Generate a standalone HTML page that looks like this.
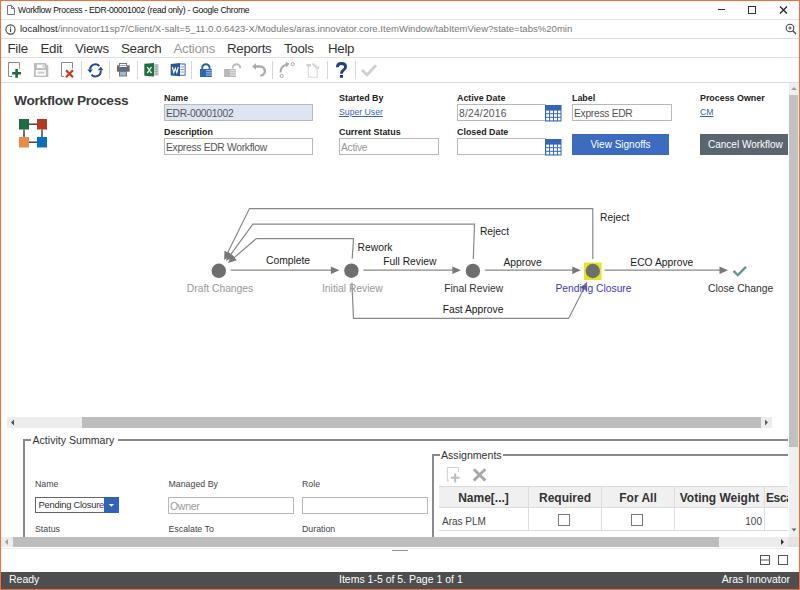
<!DOCTYPE html>
<html><head><meta charset="utf-8">
<style>
*{box-sizing:border-box;margin:0;padding:0}
html,body{width:800px;height:590px;overflow:hidden;background:#fff;font-family:"Liberation Sans",sans-serif;color:#333}
.a{position:absolute;white-space:nowrap}
#frame{position:absolute;left:0;top:0;width:800px;height:590px;border:1px solid #f0703a;pointer-events:none;z-index:50}
.hl{position:absolute;height:1px;background:#e3e3e3}
.menu{font-size:13.3px;color:#333;top:41px;line-height:16px;letter-spacing:-0.3px}
.sep{position:absolute;top:61px;width:1px;height:18px;background:#d6d6d6}
.lbl{font-size:8.9px;font-weight:bold;color:#222}
.inp{position:absolute;height:17px;border:1px solid #b9b9b9;background:#fff;font-size:10.3px;letter-spacing:-0.3px;color:#555;padding-left:1px;line-height:17px;overflow:hidden}
.lnk{font-size:8.7px;color:#3b62b0;text-decoration:underline}
.btn{position:absolute;white-space:nowrap;overflow:hidden;height:21px;color:#fff;font-size:10px;text-align:center;line-height:21px}
.dg{font-size:11px;color:#222}
.fl{font-size:8.8px;color:#444}
.th{position:absolute;top:487px;height:21px;font-size:12px;font-weight:bold;color:#333;text-align:center;line-height:23px;background:#f0f0f0;border-right:1px solid #ddd;border-bottom:1px solid #ddd}
.td{position:absolute;top:508px;height:23px;border-right:1px solid #ddd;border-bottom:1px solid #ddd;font-size:10px;color:#444;line-height:27px}
.cb{position:absolute;width:12px;height:12px;border:1px solid #777;background:#fff}
</style></head><body>
<div id="frame"></div>

<!-- title bar -->
<svg class="a" style="left:7px;top:5px" width="8" height="10" viewBox="0 0 8 10"><path d="M0.5 0.5 H4.5 L7.5 3.5 V9.5 H0.5 Z M4.5 0.5 V3.5 H7.5" fill="none" stroke="#666" stroke-width="0.9"/></svg>
<div class="a" style="left:18px;top:5px;font-size:8.6px;letter-spacing:-0.27px;color:#111;line-height:11px">Workflow Process - EDR-00001002 (read only) - Google Chrome</div>
<div class="a" style="left:717.5px;top:9px;width:7px;height:1px;background:#333"></div>
<div class="a" style="left:748px;top:6px;width:8px;height:7.5px;border:1.2px solid #333"></div>
<svg class="a" style="left:779px;top:6px" width="9" height="8" viewBox="0 0 9 8"><path d="M1 0.5 L8 7.5 M8 0.5 L1 7.5" stroke="#222" stroke-width="1.25"/></svg>
<div class="hl" style="left:1px;top:19px;width:798px;height:1px;background:#e2e2e2"></div>

<!-- url bar -->
<svg class="a" style="left:5px;top:24px" width="11" height="11" viewBox="0 0 11 11"><circle cx="5.5" cy="5.5" r="4.6" fill="none" stroke="#444" stroke-width="1.1"/><rect x="5" y="4.5" width="1.1" height="3.5" fill="#444"/><rect x="5" y="2.7" width="1.1" height="1.1" fill="#444"/></svg>
<div class="a" style="left:20px;top:22px;font-size:9.57px;line-height:13px;color:#777"><span style="color:#222">localhost</span>/innovator11sp7/Client/X-salt=5_11.0.0.6423-X/Modules/aras.innovator.core.ItemWindow/tabItemView?state=tabs%20min</div>
<svg class="a" style="left:785px;top:23px" width="12" height="12" viewBox="0 0 12 12"><circle cx="5" cy="5" r="3.8" fill="none" stroke="#444" stroke-width="1.1"/><path d="M7.8 7.8 L11 11" stroke="#444" stroke-width="1.3"/><path d="M3.3 5 H6.7 M5 3.3 V6.7" stroke="#444" stroke-width="0.9"/></svg>
<div class="hl" style="left:1px;top:38px;width:798px;background:#dcdcdc"></div>

<!-- menu -->
<div class="a menu" style="left:7.5px">File</div>
<div class="a menu" style="left:40.5px">Edit</div>
<div class="a menu" style="left:75px">Views</div>
<div class="a menu" style="left:121px">Search</div>
<div class="a menu" style="left:173.5px;color:#999">Actions</div>
<div class="a menu" style="left:227px">Reports</div>
<div class="a menu" style="left:284px">Tools</div>
<div class="a menu" style="left:328px">Help</div>
<div class="hl" style="left:1px;top:57px;width:798px;background:#e0e0e0"></div>

<!-- toolbar -->
<!--TB--><svg class="a" style="left:0;top:0" width="400" height="84" viewBox="0 0 400 84"><path d="M12 76.5 H8.5 V62.5 H19.5 V68.5" fill="none" stroke="#8a8a8a" stroke-width="1"/><path d="M12.2 73.3 H21 M16.6 69 V77.7" stroke="#1e6b43" stroke-width="2.6"/><path d="M34 63 H45.3 L48.3 66 V77 H34 Z" fill="#bdbdbd"/><rect x="37" y="64.6" width="7.5" height="3.5" fill="#fff"/><rect x="42.6" y="65" width="1.2" height="2.4" fill="#bdbdbd"/><rect x="35.8" y="70" width="10.1" height="5.6" fill="#fff"/><rect x="37.5" y="71.5" width="7" height="2.3" fill="#cfcfcf"/><path d="M64 76.5 H61.5 V62.5 H72.5 V68.5" fill="none" stroke="#8a8a8a" stroke-width="1"/><path d="M66 70.3 L73 77.2 M73 70.3 L66 77.2" stroke="#c23a22" stroke-width="2.2"/><path d="M99.3 66 A5.3 5.3 0 0 0 90.1 69.5" fill="none" stroke="#1f4b8f" stroke-width="2"/><path d="M87.3 69.5 H92.9 L90.1 73 Z" fill="#1f4b8f"/><path d="M91.5 74.6 A5.3 5.3 0 0 0 100.7 70.3" fill="none" stroke="#1f4b8f" stroke-width="2"/><path d="M97.9 70.3 H103.5 L100.7 66.8 Z" fill="#1f4b8f"/><rect x="119.5" y="63.5" width="7" height="3" fill="#fff" stroke="#777" stroke-width="1"/><rect x="117" y="65.3" width="12.7" height="6.4" fill="#6a6a6a"/><rect x="119.6" y="65.8" width="7" height="1.2" fill="#fff"/><rect x="120" y="67" width="6.4" height="1.5" fill="#3b6bc0"/><rect x="119.5" y="71.5" width="7" height="4.5" fill="#9cb9e6" stroke="#777" stroke-width="1"/><rect x="153" y="64" width="5.7" height="11.5" fill="#d0d0d0"/><path d="M154.5 66.5 H158 M154.5 69 H158 M154.5 71.5 H158 M154.5 74 H158 M156.3 64 V75.5" stroke="#8aa898" stroke-width="0.7"/><path d="M144.3 63.8 L154 62.9 V76.6 L144.3 75.8 Z" fill="#1d6f42"/><path d="M147.2 67 L151.4 73.2 M151.4 67 L147.2 73.2" stroke="#fff" stroke-width="1.3"/><rect x="179.5" y="64" width="5.6" height="11.2" fill="#fff" stroke="#2b5797" stroke-width="0.9"/><path d="M180.5 67 H184 M180.5 69.5 H184 M180.5 72 H184" stroke="#7d97c4" stroke-width="1"/><path d="M170.7 63.9 L180 63 V76.3 L170.7 75.5 Z" fill="#2b5797"/><path d="M172.4 67 L173.8 72.6 L175.3 68.2 L176.8 72.6 L178.3 67" fill="none" stroke="#fff" stroke-width="1.1"/><path d="M202.2 69.5 V67.2 A3.8 3.8 0 0 1 209.6 67.2 V69.5" fill="none" stroke="#2e5fa8" stroke-width="1.8"/><rect x="200" y="69" width="11.8" height="8" fill="#2e64b0"/><path d="M206 70.7 H211.8 M206 72.9 H211.8 M206 75.1 H211.8" stroke="#c4d3ee" stroke-width="0.9"/><path d="M232.8 68.5 V67.2 A3.8 3.8 0 0 1 240.2 67.2 V68.3" fill="none" stroke="#bdbdbd" stroke-width="1.8"/><rect x="224.1" y="69" width="11.8" height="8" fill="#b9b9b9"/><path d="M230 70.7 H235.9 M230 72.9 H235.9 M230 75.1 H235.9" stroke="#f0f0f0" stroke-width="0.9"/><path d="M255.5 66.5 H260.3 A4.55 4.55 0 0 1 260.3 75.6" fill="none" stroke="#aaaaaa" stroke-width="2.4"/><path d="M252 66.5 L256 63.2 V69.8 Z" fill="#aaaaaa"/><circle cx="281.7" cy="76" r="1.6" fill="none" stroke="#aaa" stroke-width="1"/><circle cx="292.7" cy="64.2" r="1.6" fill="none" stroke="#aaa" stroke-width="1"/><path d="M280.5 72.5 Q280.5 66 287 64.6" fill="none" stroke="#aaa" stroke-width="2"/><path d="M289.5 63.7 L285.5 61.8 L286.3 67.5 Z" fill="#aaa"/><path d="M311 66 H308.3 V77.2 H317.2 V69" fill="none" stroke="#d4d4d4" stroke-width="1"/><rect x="306.5" y="64" width="4.5" height="2.5" fill="#d4d4d4"/><path d="M312.5 63.5 L317 67.5" stroke="#d4d4d4" stroke-width="2.3"/><path d="M319.5 65.5 L319 69 L315 69 Z" fill="#d4d4d4"/><path d="M337.4 67.2 C337.4 64.6 339.1 63.5 341.5 63.5 C344.1 63.5 345.6 64.9 345.6 66.8 C345.6 68.6 344.4 69.5 343.1 70.4 C341.9 71.2 341.5 71.9 341.5 73.8" fill="none" stroke="#1e3f80" stroke-width="2.9"/><rect x="339.9" y="75" width="3.1" height="2.8" fill="#1e3f80"/><path d="M362 70 L367 75 L376 65.3" fill="none" stroke="#cfcfcf" stroke-width="2.8"/></svg><!--/TB-->
<div class="sep" style="left:81px"></div>
<div class="sep" style="left:109px"></div>
<div class="sep" style="left:137px"></div>
<div class="sep" style="left:191px"></div>
<div class="sep" style="left:272px"></div>
<div class="sep" style="left:327px"></div>
<div class="sep" style="left:355px"></div>
<div class="hl" style="left:1px;top:82px;width:798px;background:#dedede"></div>

<!-- form -->
<div class="a" style="left:14px;top:93px;font-size:13.7px;letter-spacing:-0.25px;font-weight:bold;color:#3a3a3a">Workflow Process</div>
<svg class="a" style="left:19px;top:119px" width="29" height="29" viewBox="0 0 29 29">
<path d="M10 5.2 H18 M5 10.5 V18 M23 10.5 V18 M10 23.3 H18" stroke="#444" stroke-width="1.5"/>
<rect x="0" y="0" width="10" height="10.5" fill="#1e6b43"/>
<rect x="18" y="0" width="10" height="10.5" fill="#b33a20"/>
<rect x="0" y="18" width="10" height="10.5" fill="#e88a48"/>
<rect x="18" y="18" width="10" height="10.5" fill="#0a6fc2"/>
</svg>

<div class="a lbl" style="left:164px;top:93px">Name</div>
<div class="inp" style="left:164px;top:104px;width:149px;background:#dde4f2">EDR-00001002</div>
<div class="a lbl" style="left:164px;top:127px">Description</div>
<div class="inp" style="left:164px;top:138px;width:149px">Express EDR Workflow</div>

<div class="a lbl" style="left:339px;top:93px">Started By</div>
<div class="a lnk" style="left:339px;top:106.5px">Super User</div>
<div class="a lbl" style="left:339px;top:127px">Current Status</div>
<div class="inp" style="left:339px;top:138px;width:100px;color:#999">Active</div>

<div class="a lbl" style="left:457px;top:93px">Active Date</div>
<div class="inp" style="left:457px;top:104px;width:89px;letter-spacing:0.2px">8/24/2016</div>
<svg class="a" style="left:545px;top:105px" width="17" height="17" viewBox="0 0 17 17"><rect x="0" y="0" width="16.5" height="16.5" fill="#3566b5"/><g fill="#fff"><rect x="1.2" y="5.6" width="2.9" height="2.6"/><rect x="5.1" y="5.6" width="2.9" height="2.6"/><rect x="9" y="5.6" width="2.9" height="2.6"/><rect x="12.9" y="5.6" width="2.6" height="2.6"/><rect x="1.2" y="9.2" width="2.9" height="2.6"/><rect x="5.1" y="9.2" width="2.9" height="2.6"/><rect x="9" y="9.2" width="2.9" height="2.6"/><rect x="12.9" y="9.2" width="2.6" height="2.6"/><rect x="1.2" y="12.8" width="2.9" height="2.6"/><rect x="5.1" y="12.8" width="2.9" height="2.6"/><rect x="9" y="12.8" width="2.9" height="2.6"/><rect x="12.9" y="12.8" width="2.6" height="2.6"/></g></svg>
<div class="a lbl" style="left:457px;top:127px">Closed Date</div>
<div class="inp" style="left:457px;top:138px;width:89px"></div>

<svg class="a" style="left:545px;top:139px" width="17" height="17" viewBox="0 0 17 17"><rect x="0" y="0" width="16.5" height="16.5" fill="#3566b5"/><g fill="#fff"><rect x="1.2" y="5.6" width="2.9" height="2.6"/><rect x="5.1" y="5.6" width="2.9" height="2.6"/><rect x="9" y="5.6" width="2.9" height="2.6"/><rect x="12.9" y="5.6" width="2.6" height="2.6"/><rect x="1.2" y="9.2" width="2.9" height="2.6"/><rect x="5.1" y="9.2" width="2.9" height="2.6"/><rect x="9" y="9.2" width="2.9" height="2.6"/><rect x="12.9" y="9.2" width="2.6" height="2.6"/><rect x="1.2" y="12.8" width="2.9" height="2.6"/><rect x="5.1" y="12.8" width="2.9" height="2.6"/><rect x="9" y="12.8" width="2.9" height="2.6"/><rect x="12.9" y="12.8" width="2.6" height="2.6"/></g></svg>
<div class="a lbl" style="left:572px;top:93px">Label</div>
<div class="inp" style="left:572px;top:104px;width:100px">Express EDR</div>
<div class="btn" style="left:572px;top:134px;width:97px;background:#3b6cc0">View Signoffs</div>

<div class="a lbl" style="left:700px;top:93px">Process Owner</div>
<div class="a lnk" style="left:700px;top:106.5px">CM</div>
<div class="btn" style="left:700px;top:134px;width:88px;background:#5b6570;text-align:left;padding-left:8px">Cancel Workflow</div>

<!-- right scrollbar -->
<div class="a" style="left:789px;top:83px;width:10px;height:454px;background:#efefef"></div>
<div class="a" style="left:789px;top:95px;width:9px;height:352px;background:#c1c1c1"></div>

<svg class="a" style="left:789px;top:83px" width="10" height="12"><path d="M2 7 H8 L5 4 Z" fill="#a0a0a0"/></svg>
<!-- diagram -->
<!--DIAG--><svg class="a" style="left:0;top:0" width="800" height="420" viewBox="0 0 800 420" font-family="Liberation Sans" font-size="10.3"><path d="M230.8 270.2 L331.9 270.2" fill="none" stroke="#888" stroke-width="1.2"/><path d="M339.4 270.2 L330.9 274.0 L330.9 266.4 Z" fill="#777"/><path d="M363.4 270.2 L453.4 270.2" fill="none" stroke="#888" stroke-width="1.2"/><path d="M460.9 270.2 L452.4 274.0 L452.4 266.4 Z" fill="#777"/><path d="M484.9 270.2 L573.3 270.2" fill="none" stroke="#888" stroke-width="1.2"/><path d="M580.8 270.2 L572.3 274.0 L572.3 266.4 Z" fill="#777"/><path d="M604.8 270.2 L720.5 270.2" fill="none" stroke="#888" stroke-width="1.2"/><path d="M728.0 270.2 L719.5 274.0 L719.5 266.4 Z" fill="#777"/><path d="M352.2 258.7 L353.5 238.6 L256.3 238.6 L233.6 258.1" fill="none" stroke="#888" stroke-width="1.2"/><path d="M227.9 263.0 L231.9 254.6 L236.8 260.3 Z" fill="#777"/><path d="M473.3 258.9 L474.5 224.2 L252.9 224.2 L230.3 255.1" fill="none" stroke="#888" stroke-width="1.2"/><path d="M225.9 261.1 L227.8 252.0 L234.0 256.5 Z" fill="#777"/><path d="M592.8 259.0 L592.8 208.6 L249.5 208.6 L227.4 253.3" fill="none" stroke="#888" stroke-width="1.2"/><path d="M224.1 260.0 L224.5 250.7 L231.3 254.1 Z" fill="#777"/><path d="M351.9 282.7 L353.5 318.4 L568.6 318.4 L583.9 288.4" fill="none" stroke="#888" stroke-width="1.2"/><path d="M587.3 281.7 L586.9 291.0 L580.1 287.5 Z" fill="#777"/><rect x="584" y="262.5" width="17.5" height="17.5" fill="#e5e51e"/><circle cx="218.8" cy="270.8" r="7.2" fill="#6e6e6e"/><circle cx="351.4" cy="270.7" r="7.2" fill="#6e6e6e"/><circle cx="472.9" cy="270.9" r="7.2" fill="#6e6e6e"/><circle cx="592.8" cy="271.0" r="7.2" fill="#6e6e6e"/><path d="M733.5 270.8 L737.8 275 L746 266.8" fill="none" stroke="#6a9497" stroke-width="2.4"/><text x="266" y="263.8" fill="#222">Complete</text><text x="357.6" y="250.8" fill="#222">Rework</text><text x="383.2" y="265.0" fill="#222">Full Review</text><text x="479.9" y="234.8" fill="#222">Reject</text><text x="503.4" y="266.1" fill="#222">Approve</text><text x="600.1" y="220.8" fill="#222">Reject</text><text x="630.3" y="266.0" fill="#222">ECO Approve</text><text x="442.7" y="312.6" fill="#222">Fast Approve</text><text x="186.8" y="292.3" fill="#999">Draft Changes</text><text x="322" y="292.2" fill="#999">Initial Review</text><text x="444.2" y="292.2" fill="#333">Final Review</text><text x="555.4" y="292.2" fill="#3a3ac4">Pending Closure</text><text x="708" y="292.2" fill="#333">Close Change</text></svg><!--/DIAG-->

<!-- diagram h scrollbar -->
<div class="a" style="left:7px;top:417px;width:765px;height:11px;background:#ededed"></div>
<div class="a" style="left:82px;top:417px;width:679px;height:11px;background:#bdbdbd"></div>

<svg class="a" style="left:7px;top:417px" width="12" height="11"><path d="M4 5.5 L7 2.5 V8.5 Z" fill="#505050"/></svg>
<svg class="a" style="left:761px;top:417px" width="11" height="11"><path d="M7 5.5 L4 2.5 V8.5 Z" fill="#606060"/></svg>
<!-- activity summary -->
<!-- fieldset activity -->
<div class="a" style="left:23px;top:439px;width:2px;height:98px;background:#8a8a8a"></div>
<div class="a" style="left:23px;top:439px;width:8px;height:2px;background:#8a8a8a"></div>
<div class="a" style="left:118px;top:439px;width:670px;height:2px;background:#8a8a8a"></div>
<div class="a" style="left:32.5px;top:434px;font-size:10.6px;color:#333;line-height:12px">Activity Summary</div>
<div class="a fl" style="left:35px;top:479px">Name</div>
<div class="a fl" style="left:168.5px;top:479px">Managed By</div>
<div class="a fl" style="left:302px;top:479px">Role</div>
<div class="a" style="left:35px;top:497px;width:84px;height:16px;border:1px solid #666;background:#fff"></div>
<div class="a" style="left:38.5px;top:499px;font-size:9.4px;letter-spacing:-0.25px;color:#333;line-height:12px">Pending Closure</div>
<div class="a" style="left:104px;top:497px;width:15px;height:16px;background:#2f62b8"></div>
<svg class="a" style="left:104px;top:497px" width="15" height="16"><path d="M4.8 7 H10 L7.4 9.7 Z" fill="#fff"/></svg>
<div class="inp" style="left:168px;top:497px;width:126px;color:#999;font-size:10.5px">Owner</div>
<div class="inp" style="left:302px;top:497px;width:126px"></div>
<div class="a fl" style="left:35px;top:524px">Status</div>
<div class="a fl" style="left:168.5px;top:524px">Escalate To</div>
<div class="a fl" style="left:302px;top:524px">Duration</div>

<!-- assignments -->
<div class="a" style="left:432px;top:454px;width:2px;height:83px;background:#8a8a8a"></div>
<div class="a" style="left:432px;top:454px;width:8px;height:2px;background:#8a8a8a"></div>
<div class="a" style="left:503px;top:454px;width:285px;height:2px;background:#8a8a8a"></div>
<div class="a" style="left:441px;top:449px;font-size:10.6px;color:#333;line-height:12px">Assignments</div>
<svg class="a" style="left:440px;top:462px" width="56" height="24" viewBox="440 462 56 24">
<path d="M449 481 H447.3 V467.5 H458.5 V472" fill="none" stroke="#cfcfcf" stroke-width="1"/>
<path d="M451 477.8 H459.5 M455.2 473.5 V482.5" stroke="#bdbdbd" stroke-width="2"/>
<path d="M473.8 469.3 L485.3 480.5 M485.3 469.3 L473.8 480.5" stroke="#a8a8a8" stroke-width="3"/>
</svg>
<div class="a" style="left:439px;top:486px;width:349px;height:45px;border-top:1px solid #dadada"></div>
<div class="th" style="left:439px;width:90px">Name[...]</div>
<div class="th" style="left:529px;width:73px">Required</div>
<div class="th" style="left:602px;width:73px">For All</div>
<div class="th" style="left:675px;width:90px">Voting Weight</div>
<div class="th" style="left:765px;width:23px;text-align:left;padding-left:1px;letter-spacing:-0.4px;border-right:none;overflow:hidden">Escalate</div>
<div class="td" style="left:439px;width:90px;padding-left:3px">Aras PLM</div>
<div class="td" style="left:529px;width:73px"></div>
<div class="td" style="left:602px;width:73px"></div>
<div class="td" style="left:675px;width:90px;text-align:right;padding-right:2px">100</div>
<div class="td" style="left:765px;width:23px;border-right:none"></div>
<div class="cb" style="left:558px;top:514px"></div>
<div class="cb" style="left:631px;top:514px"></div>
<!-- v scroll down arrow -->
<svg class="a" style="left:789px;top:525px" width="10" height="10"><path d="M2.5 3.5 H7.5 L5 6.2 Z" fill="#606060"/></svg>
<!-- splitter -->
<div class="a" style="left:1px;top:548px;width:787px;height:1px;background:#ececec"></div>
<div class="a" style="left:392px;top:550px;width:16px;height:1px;background:#8a8f96"></div>
<svg class="a" style="left:758px;top:553px" width="34" height="14"><rect x="2.5" y="2.5" width="9" height="9" fill="none" stroke="#555" stroke-width="1"/><path d="M2.5 7 H11.5" stroke="#555" stroke-width="1"/><rect x="20.5" y="2.5" width="9" height="9" fill="none" stroke="#555" stroke-width="1"/></svg>

<!-- bottom h scrollbar -->
<div class="a" style="left:1px;top:537px;width:787px;height:10px;background:#ececec"></div>
<div class="a" style="left:13px;top:537px;width:706px;height:10px;background:#bdbdbd"></div>
<div class="a" style="left:788px;top:537px;width:11px;height:10px;background:#e3e3e3"></div>

<svg class="a" style="left:1px;top:537px" width="12" height="10"><path d="M4 5 L7 2 V8 Z" fill="#a0a0a0"/></svg>
<svg class="a" style="left:776px;top:537px" width="12" height="10"><path d="M8 5 L5 2 V8 Z" fill="#303030"/></svg>
<!-- status bar -->
<div class="a" style="left:1px;top:572px;width:798px;height:17px;background:#4e4e4e"></div>
<div class="a" style="left:9px;top:573px;font-size:10.5px;color:#fff">Ready</div>
<div class="a" style="left:339px;top:573px;font-size:10.5px;color:#fff">Items 1-5 of 5. Page 1 of 1</div>
<div class="a" style="right:10px;top:573px;font-size:10.5px;color:#fff">Aras Innovator</div>
</body></html>
